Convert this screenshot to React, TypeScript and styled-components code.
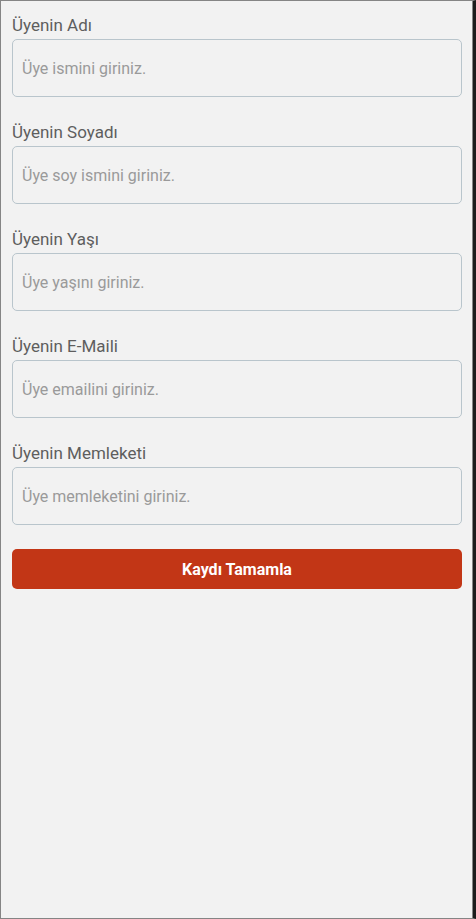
import { FunctionComponent } from "react";
import styled, { createGlobalStyle } from "styled-components";

const GlobalStyle = createGlobalStyle`
  html, body {
    margin: 0;
    padding: 0;
    background: #f2f2f2;
  }
  * {
    box-sizing: border-box;
  }
`;

const Screen = styled.div`
  width: 476px;
  height: 919px;
  background: #f2f2f2;
  border-top: 1px solid #858585;
  border-left: 1px solid #858585;
  border-bottom: 1px solid #858585;
  border-right: 3px solid #1c1c1c;
  box-shadow: inset -1px 0 0 #858585;
  display: flex;
  flex-direction: column;
  padding: 13px 11px 0 11px;
  gap: 24px;
  font-family: Roboto, "Noto Sans", sans-serif;
`;

const Field = styled.div`
  display: flex;
  flex-direction: column;
  gap: 3px;
`;

const Label = styled.label`
  font-size: 17px;
  line-height: 22px;
  color: #5e5e5e;
`;

const Input = styled.input`
  height: 58px;
  width: 100%;
  border: 1px solid #b9c5cc;
  border-radius: 5px;
  background: #f2f2f2;
  padding: 0 9px;
  font-family: inherit;
  font-size: 16px;
  color: #333;
  outline: none;

  &::placeholder {
    color: #9a9a9a;
  }
`;

const SubmitButton = styled.button`
  height: 40px;
  width: 100%;
  border: none;
  border-radius: 5px;
  background: #c23616;
  color: #ffffff;
  font-family: inherit;
  font-size: 16px;
  font-weight: 700;
  cursor: pointer;
`;

type FormField = { label: string; placeholder: string };

const fields: FormField[] = [
  { label: "Üyenin Adı", placeholder: "Üye ismini giriniz." },
  { label: "Üyenin Soyadı", placeholder: "Üye soy ismini giriniz." },
  { label: "Üyenin Yaşı", placeholder: "Üye yaşını giriniz." },
  { label: "Üyenin E-Maili", placeholder: "Üye emailini giriniz." },
  { label: "Üyenin Memleketi", placeholder: "Üye memleketini giriniz." },
];

const App: FunctionComponent = () => {
  return (
    <>
      <GlobalStyle />
      <Screen>
        {fields.map((f) => (
          <Field key={f.label}>
            <Label>{f.label}</Label>
            <Input placeholder={f.placeholder} />
          </Field>
        ))}
        <SubmitButton>Kaydı Tamamla</SubmitButton>
      </Screen>
    </>
  );
};

export default App;
